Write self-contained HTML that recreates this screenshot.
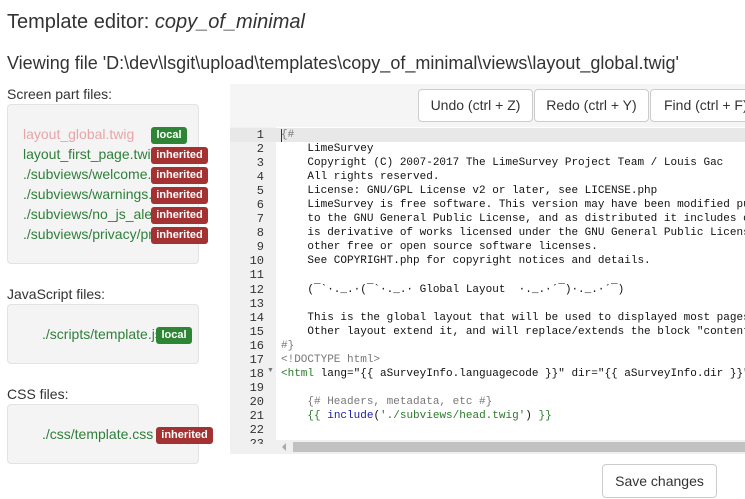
<!DOCTYPE html>
<html><head><meta charset="utf-8"><style>
*{margin:0;padding:0;box-sizing:border-box}
body{width:745px;height:499px;overflow:hidden;background:#fff;font-family:"Liberation Sans",Arial,sans-serif;color:#333;position:relative}
.a{position:absolute;white-space:nowrap}
.panel{position:absolute;left:7px;width:192px;background:#f4f4f4;border:1px solid #e3e3e3;border-radius:4px}
.f{position:absolute;font-size:14px;color:#2f7f3a;white-space:nowrap;line-height:16px}
.b{position:absolute;height:17px;border-radius:3px;color:#fff;font-weight:bold;font-size:11px;line-height:17px;text-align:center}
.loc{background:#2e8536;width:36px}
.inh{background:#a43232;width:57px}
.btn{position:absolute;top:89px;height:33px;border:1px solid #ccc;border-radius:4px;background:#fff;font-size:14px;line-height:31px;text-align:center;color:#333}
.code{position:absolute;left:281px;top:128px;font-family:"Liberation Mono",monospace;font-size:11px;line-height:14.05px;white-space:pre;color:#111}
.ln{position:absolute;left:230px;width:34px;top:128px;font-family:"Liberation Mono",monospace;font-size:12px;line-height:14.05px;text-align:right;color:#333;white-space:pre}
.c{color:#777}.t{color:#1a1aa6}.s{color:#2a7a2a}
</style></head><body>
<div class="a" style="left:7px;top:11px;font-size:20px">Template editor: <i>copy_of_minimal</i></div>
<div class="a" style="left:7px;top:53px;font-size:18px">Viewing file 'D:\dev\lsgit\upload\templates\copy_of_minimal\views\layout_global.twig'</div>

<div class="a" style="left:7px;top:86px;font-size:14px">Screen part files:</div>
<div class="panel" style="top:104px;height:160px"></div>
<div style="position:absolute;left:8px;top:104px;width:200px;height:160px;overflow:hidden">
<div class="f" style="left:15px;top:22px;color:#e8a5a8">layout_global.twig</div>
<div class="f" style="left:15px;top:42px">layout_first_page.twig</div>
<div class="f" style="left:15px;top:62px">./subviews/welcome.twig</div>
<div class="f" style="left:15px;top:82px">./subviews/warnings.twig</div>
<div class="f" style="left:15px;top:102px">./subviews/no_js_alert.twig</div>
<div class="f" style="left:15px;top:122px">./subviews/privacy/privacy.twig</div>
</div>
<div class="b loc" style="left:151px;top:127px">local</div>
<div class="b inh" style="left:151px;top:147px">inherited</div>
<div class="b inh" style="left:151px;top:167px">inherited</div>
<div class="b inh" style="left:151px;top:187px">inherited</div>
<div class="b inh" style="left:151px;top:207px">inherited</div>
<div class="b inh" style="left:151px;top:227px">inherited</div>

<div class="a" style="left:7px;top:286px;font-size:14px">JavaScript files:</div>
<div class="panel" style="top:304px;height:60px"></div>
<div style="position:absolute;left:8px;top:304px;width:148px;height:60px;overflow:hidden"><div class="f" style="left:34px;top:22px">./scripts/template.js</div></div>
<div class="b loc" style="left:156px;top:327px">local</div>

<div class="a" style="left:7px;top:386px;font-size:14px">CSS files:</div>
<div class="panel" style="top:404px;height:60px"></div>
<div class="f" style="left:42px;top:426px">./css/template.css</div>
<div class="b inh" style="left:156px;top:427px">inherited</div>

<div style="position:absolute;left:230px;top:84px;width:515px;height:370px;background:#f5f5f5;overflow:hidden">
<div style="position:absolute;left:0;top:43px;width:515px;height:322px;background:#fff"></div>
<div style="position:absolute;left:0;top:43px;width:46px;height:327px;background:#f0f0f0"></div>
<div style="position:absolute;left:0;top:44px;width:515px;height:14px;background:#e8e8e8"></div>
<div style="position:absolute;left:46px;top:356px;width:469px;height:14px;background:#f0f0f0"></div>
<div style="position:absolute;left:63px;top:358px;width:452px;height:10px;background:#c1c1c1"></div>
<div style="position:absolute;left:52px;top:359px;width:0;height:0;border-top:4px solid transparent;border-bottom:4px solid transparent;border-right:4px solid #aaa"></div>
</div>
<div class="btn" style="left:418px;width:115px">Undo (ctrl + Z)</div>
<div class="btn" style="left:534px;width:115px">Redo (ctrl + Y)</div>
<div class="btn" style="left:650px;width:115px;text-align:left;padding-left:13px">Find (ctrl + F)</div>

<div style="position:absolute;left:230px;top:128px;width:515px;height:316px;overflow:hidden">
<div class="ln" style="left:0;top:0">1
2
3
4
5
6
7
8
9
10
11
12
13
14
15
16
17
18
19
20
21
22
23</div>
<div class="a" style="left:37px;top:239px;font-size:7px;color:#777">▼</div>
<div class="code" style="left:51px;top:0"><span class="c">{#</span>
    LimeSurvey
    Copyright (C) 2007-2017 The LimeSurvey Project Team / Louis Gac
    All rights reserved.
    License: GNU/GPL License v2 or later, see LICENSE.php
    LimeSurvey is free software. This version may have been modified pursuant
    to the GNU General Public License, and as distributed it includes or
    is derivative of works licensed under the GNU General Public License or
    other free or open source software licenses.
    See COPYRIGHT.php for copyright notices and details.

    (¯`·._.·(¯`·._.· Global Layout  ·._.·´¯)·._.·´¯)

    This is the global layout that will be used to displayed most pages
    Other layout extend it, and will replace/extends the block "content"
<span class="c">#}</span>
<span class="c">&lt;!DOCTYPE html&gt;</span>
<span class="s">&lt;html</span> lang="{{ aSurveyInfo.languagecode }}" dir="{{ aSurveyInfo.dir }}"

    <span class="c">{# Headers, metadata, etc #}</span>
    <span class="s">{{</span> <span class="t">include</span>(<span class="s">'./subviews/head.twig'</span>) <span class="s">}}</span>

</div>
</div>
<div style="position:absolute;left:281px;top:129px;width:1px;height:13px;background:#333"></div>

<div class="btn" style="left:602px;top:464px;width:115px;height:34px;line-height:32px">Save changes</div>
</body></html>
